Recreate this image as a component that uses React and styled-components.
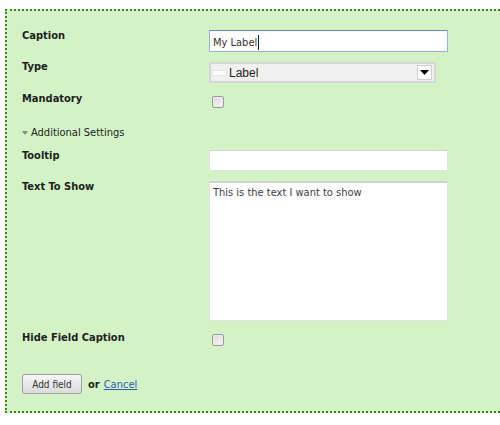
import React from "react";
import styled, { createGlobalStyle } from "styled-components";

const Global = createGlobalStyle`
  html, body { margin: 0; padding: 0; background: #fff; overflow: hidden; }
  body { font-family: "DejaVu Sans Condensed", "DejaVu Sans", sans-serif; font-size: 11px; color: #222; }
`;

const Panel = styled.div`
  margin: 9px 0 0 5px;
  height: 404px;
  box-sizing: border-box;
  background: #d3f3c6;
  border: 2px dotted #3f8020;
  border-right: none;
  padding: 19px 0 0 15px;
  display: flex;
  flex-direction: column;
`;

const Row = styled.div`
  display: flex;
  align-items: flex-start;
  margin-bottom: ${(p) => p.$mb}px;
`;

const Label = styled.div`
  width: 187px;
  flex: none;
  font-weight: bold;
  line-height: 14px;
  margin-top: ${(p) => p.$offset ?? -1}px;
  color: #1e1e1e;
`;

const TextBox = styled.div`
  width: 239px;
  height: ${(p) => (p.$focused ? 22 : 21)}px;
  box-sizing: border-box;
  background: #fff;
  border: 1px solid ${(p) => (p.$focused ? "#8fb6dd" : "#e2e2e2")};
  border-top-color: ${(p) => (p.$focused ? "#5b8fc7" : "#d4d4d4")};
  padding: 3px 3px 0;
  line-height: 14px;
  color: #333;
  display: flex;
  align-items: center;
`;

const Caret = styled.span`
  display: inline-block;
  width: 1px;
  height: 15px;
  background: #222;
  margin-left: 1px;
`;

const Select = styled.div`
  width: 227px;
  height: 21px;
  box-sizing: border-box;
  background: #f0f0f0;
  border: 2px solid #d6d6d6;
  display: flex;
  align-items: center;
  padding: 0 2px 0 1px;
`;

const OptionIcon = styled.span`
  width: 15px;
  height: 6px;
  box-sizing: border-box;
  background: #fff;
  border: 1px solid #e6e6e6;
  margin-right: 2px;
`;

const OptionText = styled.span`
  font-family: "Liberation Sans", Arial, sans-serif;
  font-size: 12px;
  color: #222;
  flex: 1;
`;

const DropButton = styled.span`
  width: 15px;
  height: 15px;
  box-sizing: border-box;
  background: #fff;
  border: 1px solid #cfcfcf;
  display: flex;
  align-items: center;
  justify-content: center;
`;

const Checkbox = styled.span`
  width: 12px;
  height: 12px;
  box-sizing: border-box;
  margin-left: 3px;
  border: 1px solid #9a9a9a;
  border-radius: 2px;
  background: linear-gradient(135deg, #dcdcdc, #f4f4f4);
  box-shadow: inset 0 0 0 1px #eee;
`;

const Toggle = styled.div`
  display: flex;
  align-items: center;
  line-height: 14px;
  color: #222;
  margin-top: -2px;
`;

const Arrow = styled.span`
  width: 0;
  height: 0;
  border-left: 3px solid transparent;
  border-right: 3px solid transparent;
  border-top: 4px solid #888;
  margin: 0 3px 0 0;
`;

const TextArea = styled.div`
  width: 239px;
  height: 140px;
  box-sizing: border-box;
  background: #fff;
  border: 1px solid #e2e2e2;
  border-top: 2px solid #d0d0d0;
  padding: 3px 3px;
  line-height: 14px;
  color: #3c3c50;
`;

const Actions = styled.div`
  display: flex;
  align-items: center;
  gap: 6px;
`;

const Button = styled.button`
  width: 60px;
  height: 20px;
  box-sizing: border-box;
  border: 1px solid #a0a0a0;
  border-radius: 3px;
  background: linear-gradient(#f7f7f7, #dcdcdc);
  font-family: "DejaVu Sans Condensed", "DejaVu Sans", sans-serif;
  font-size: 10px;
  color: #333;
  padding: 0;
`;

const Or = styled.span`
  font-weight: bold;
  color: #222;
`;

const Link = styled.a`
  color: #2a5db0;
  text-decoration: underline;
  margin-left: -2px;
`;

export default function App() {
  return (
    <>
      <Global />
      <Panel>
        <Row $mb={10}>
          <Label>Caption</Label>
          <TextBox $focused>
            My Label<Caret />
          </TextBox>
        </Row>
        <Row $mb={13}>
          <Label $offset={-2}>Type</Label>
          <Select>
            <OptionIcon />
            <OptionText>Label</OptionText>
            <DropButton>
              <svg width="9" height="5" viewBox="0 0 9 5">
                <path d="M0 0h9L4.5 5z" fill="#000" />
              </svg>
            </DropButton>
          </Select>
        </Row>
        <Row $mb={20}>
          <Label $offset={-4}>Mandatory</Label>
          <Checkbox />
        </Row>
        <Row $mb={10}>
          <Toggle>
            <Arrow />
            Additional Settings
          </Toggle>
        </Row>
        <Row $mb={10}>
          <Label>Tooltip</Label>
          <TextBox />
        </Row>
        <Row $mb={13}>
          <Label>Text To Show</Label>
          <TextArea>This is the text I want to show</TextArea>
        </Row>
        <Row $mb={28}>
          <Label $offset={-3}>Hide Field Caption</Label>
          <Checkbox />
        </Row>
        <Actions>
          <Button>Add field</Button>
          <Or>or</Or>
          <Link href="#">Cancel</Link>
        </Actions>
      </Panel>
    </>
  );
}
